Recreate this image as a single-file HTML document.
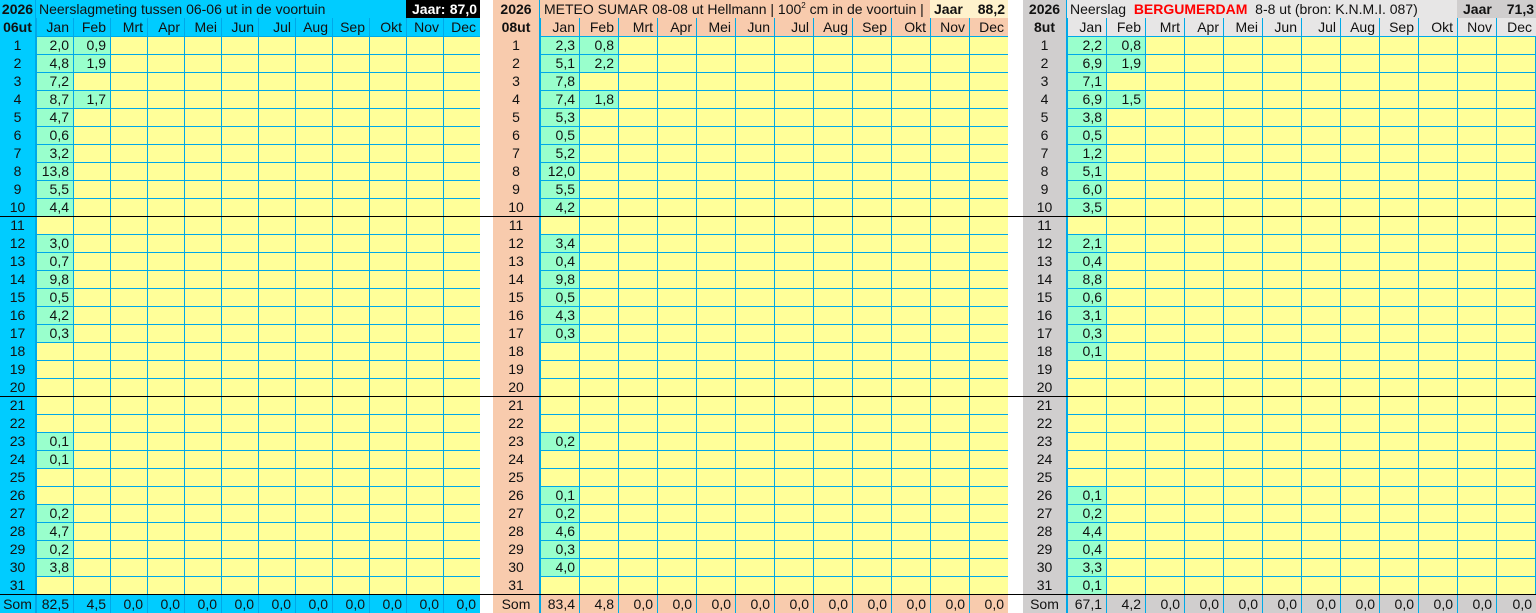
<!DOCTYPE html>
<html><head><meta charset="utf-8"><style>
*{margin:0;padding:0;box-sizing:border-box}
body{width:1536px;height:613px;position:relative;background:#fff;font-family:"Liberation Sans",sans-serif;font-size:14px;color:#111;overflow:hidden}
.p{position:absolute;top:0;height:613px}
.t{position:absolute;top:0;height:18px;line-height:18px;white-space:nowrap;overflow:hidden}
.t sup{font-size:8px;line-height:0;vertical-align:baseline;position:relative;top:-6px}
.dc{position:absolute;left:0;top:0;height:613px;text-align:center;line-height:18px;border-right:1px solid #00a8e8}
.dc b{display:block;height:18px}
.dc div{line-height:18px}
.row{position:absolute;display:flex;height:18px;line-height:18px}
.row span{display:block;text-align:right;padding-right:4px;height:100%;border-left:1px solid #00a8e8}
.b{position:absolute;top:36px;height:558px;background:#ffff99}
.b::after{content:"";position:absolute;inset:0;background-image:linear-gradient(to right,#00a8e8 1px,transparent 1px),linear-gradient(to bottom,#00a8e8 1px,transparent 1px);background-size:var(--w) 100%,100% 18px}
.g{position:absolute;height:18px;line-height:18px;background:#99ffcc;text-align:right;padding-right:4px}
.bl{position:absolute;left:0;width:1536px;height:1px;background:#000}
</style></head><body>

<!-- PANEL 1 -->
<div class="p" style="left:0;width:480px;--w:37px">
 <div class="t" style="left:36px;width:444px;background:#00ccff;padding-left:3px">Neerslagmeting tussen 06-06 ut in de voortuin</div>
 <div class="t" style="left:406px;width:74px;background:#000;color:#fff;font-weight:bold;padding:0 3px 0 6px;display:flex;justify-content:space-between"><span>Jaar:</span><span>87,0</span></div>
 <div class="dc" style="width:36px;background:#00ccff"><b>2026</b><b>06ut</b>
  <div>1<br>2<br>3<br>4<br>5<br>6<br>7<br>8<br>9<br>10<br>11<br>12<br>13<br>14<br>15<br>16<br>17<br>18<br>19<br>20<br>21<br>22<br>23<br>24<br>25<br>26<br>27<br>28<br>29<br>30<br>31</div>
  <div style="padding-top:1px">Som</div></div>
 <div class="row" style="left:36px;top:18px;background:#00ccff"><span style="width:37px">Jan</span><span style="width:37px">Feb</span><span style="width:37px">Mrt</span><span style="width:37px">Apr</span><span style="width:37px">Mei</span><span style="width:37px">Jun</span><span style="width:37px">Jul</span><span style="width:37px">Aug</span><span style="width:37px">Sep</span><span style="width:37px">Okt</span><span style="width:37px">Nov</span><span style="width:37px">Dec</span></div>
 <div class="b" style="left:36px;width:444px">
  <div class="g" style="left:0;width:37px;top:0">2,0</div><div class="g" style="left:0;width:37px;top:18px">4,8</div><div class="g" style="left:0;width:37px;top:36px">7,2</div><div class="g" style="left:0;width:37px;top:54px">8,7</div><div class="g" style="left:0;width:37px;top:72px">4,7</div><div class="g" style="left:0;width:37px;top:90px">0,6</div><div class="g" style="left:0;width:37px;top:108px">3,2</div><div class="g" style="left:0;width:37px;top:126px">13,8</div><div class="g" style="left:0;width:37px;top:144px">5,5</div><div class="g" style="left:0;width:37px;top:162px">4,4</div>
  <div class="g" style="left:0;width:37px;top:198px">3,0</div><div class="g" style="left:0;width:37px;top:216px">0,7</div><div class="g" style="left:0;width:37px;top:234px">9,8</div><div class="g" style="left:0;width:37px;top:252px">0,5</div><div class="g" style="left:0;width:37px;top:270px">4,2</div><div class="g" style="left:0;width:37px;top:288px">0,3</div>
  <div class="g" style="left:0;width:37px;top:396px">0,1</div><div class="g" style="left:0;width:37px;top:414px">0,1</div><div class="g" style="left:0;width:37px;top:468px">0,2</div><div class="g" style="left:0;width:37px;top:486px">4,7</div><div class="g" style="left:0;width:37px;top:504px">0,2</div><div class="g" style="left:0;width:37px;top:522px">3,8</div>
  <div class="g" style="left:37px;width:37px;top:0">0,9</div><div class="g" style="left:37px;width:37px;top:18px">1,9</div><div class="g" style="left:37px;width:37px;top:54px">1,7</div>
 </div>
 <div class="row" style="left:36px;top:595px;height:18px;background:#00ccff"><span style="width:37px">82,5</span><span style="width:37px">4,5</span><span style="width:37px">0,0</span><span style="width:37px">0,0</span><span style="width:37px">0,0</span><span style="width:37px">0,0</span><span style="width:37px">0,0</span><span style="width:37px">0,0</span><span style="width:37px">0,0</span><span style="width:37px">0,0</span><span style="width:37px">0,0</span><span style="width:37px">0,0</span></div>
</div>

<!-- PANEL 2 -->
<div class="p" style="left:493px;width:515px;--w:39px">
 <div class="t" style="left:47px;width:468px;background:#f8cbad;padding-left:4px">METEO SUMAR 08-08 ut Hellmann | 100<sup>2</sup> cm in de voortuin |</div>
 <div class="t" style="left:437px;width:78px;background:#fff2cc;font-weight:bold;padding:0 3px 0 4px;display:flex;justify-content:space-between"><span>Jaar</span><span>88,2</span></div>
 <div class="dc" style="width:47px;background:#f8cbad"><b>2026</b><b>08ut</b>
  <div>1<br>2<br>3<br>4<br>5<br>6<br>7<br>8<br>9<br>10<br>11<br>12<br>13<br>14<br>15<br>16<br>17<br>18<br>19<br>20<br>21<br>22<br>23<br>24<br>25<br>26<br>27<br>28<br>29<br>30<br>31</div>
  <div style="padding-top:1px">Som</div></div>
 <div class="row" style="left:47px;top:18px;background:#f8cbad"><span style="width:39px">Jan</span><span style="width:39px">Feb</span><span style="width:39px">Mrt</span><span style="width:39px">Apr</span><span style="width:39px">Mei</span><span style="width:39px">Jun</span><span style="width:39px">Jul</span><span style="width:39px">Aug</span><span style="width:39px">Sep</span><span style="width:39px">Okt</span><span style="width:39px">Nov</span><span style="width:39px">Dec</span></div>
 <div class="b" style="left:47px;width:468px">
  <div class="g" style="left:0;width:39px;top:0">2,3</div><div class="g" style="left:0;width:39px;top:18px">5,1</div><div class="g" style="left:0;width:39px;top:36px">7,8</div><div class="g" style="left:0;width:39px;top:54px">7,4</div><div class="g" style="left:0;width:39px;top:72px">5,3</div><div class="g" style="left:0;width:39px;top:90px">0,5</div><div class="g" style="left:0;width:39px;top:108px">5,2</div><div class="g" style="left:0;width:39px;top:126px">12,0</div><div class="g" style="left:0;width:39px;top:144px">5,5</div><div class="g" style="left:0;width:39px;top:162px">4,2</div>
  <div class="g" style="left:0;width:39px;top:198px">3,4</div><div class="g" style="left:0;width:39px;top:216px">0,4</div><div class="g" style="left:0;width:39px;top:234px">9,8</div><div class="g" style="left:0;width:39px;top:252px">0,5</div><div class="g" style="left:0;width:39px;top:270px">4,3</div><div class="g" style="left:0;width:39px;top:288px">0,3</div>
  <div class="g" style="left:0;width:39px;top:396px">0,2</div><div class="g" style="left:0;width:39px;top:450px">0,1</div><div class="g" style="left:0;width:39px;top:468px">0,2</div><div class="g" style="left:0;width:39px;top:486px">4,6</div><div class="g" style="left:0;width:39px;top:504px">0,3</div><div class="g" style="left:0;width:39px;top:522px">4,0</div>
  <div class="g" style="left:39px;width:39px;top:0">0,8</div><div class="g" style="left:39px;width:39px;top:18px">2,2</div><div class="g" style="left:39px;width:39px;top:54px">1,8</div>
 </div>
 <div class="row" style="left:47px;top:595px;height:18px;background:#f8cbad"><span style="width:39px">83,4</span><span style="width:39px">4,8</span><span style="width:39px">0,0</span><span style="width:39px">0,0</span><span style="width:39px">0,0</span><span style="width:39px">0,0</span><span style="width:39px">0,0</span><span style="width:39px">0,0</span><span style="width:39px">0,0</span><span style="width:39px">0,0</span><span style="width:39px">0,0</span><span style="width:39px">0,0</span></div>
</div>

<!-- PANEL 3 -->
<div class="p" style="left:1023px;width:513px;--w:39px">
 <div class="t" style="left:44px;width:469px;background:#e7e6e6;padding-left:3px">Neerslag &nbsp;<b style="color:#ff0000">BERGUMERDAM</b> &nbsp;8-8 ut (bron: K.N.M.I. 087)</div>
 <div class="t" style="left:434px;width:79px;background:#d0cece;font-weight:bold;padding:0 2px 0 6px;display:flex;justify-content:space-between"><span>Jaar</span><span>71,3</span></div>
 <div class="dc" style="width:44px;background:#d0cece"><b>2026</b><b>8ut</b>
  <div>1<br>2<br>3<br>4<br>5<br>6<br>7<br>8<br>9<br>10<br>11<br>12<br>13<br>14<br>15<br>16<br>17<br>18<br>19<br>20<br>21<br>22<br>23<br>24<br>25<br>26<br>27<br>28<br>29<br>30<br>31</div>
  <div style="padding-top:1px">Som</div></div>
 <div class="row" style="left:44px;top:18px;background:#e7e6e6"><span style="width:39px">Jan</span><span style="width:39px">Feb</span><span style="width:39px">Mrt</span><span style="width:39px">Apr</span><span style="width:39px">Mei</span><span style="width:39px">Jun</span><span style="width:39px">Jul</span><span style="width:39px">Aug</span><span style="width:39px">Sep</span><span style="width:39px">Okt</span><span style="width:39px">Nov</span><span style="width:40px">Dec</span></div>
 <div class="b" style="left:44px;width:469px">
  <div class="g" style="left:0;width:39px;top:0">2,2</div><div class="g" style="left:0;width:39px;top:18px">6,9</div><div class="g" style="left:0;width:39px;top:36px">7,1</div><div class="g" style="left:0;width:39px;top:54px">6,9</div><div class="g" style="left:0;width:39px;top:72px">3,8</div><div class="g" style="left:0;width:39px;top:90px">0,5</div><div class="g" style="left:0;width:39px;top:108px">1,2</div><div class="g" style="left:0;width:39px;top:126px">5,1</div><div class="g" style="left:0;width:39px;top:144px">6,0</div><div class="g" style="left:0;width:39px;top:162px">3,5</div>
  <div class="g" style="left:0;width:39px;top:198px">2,1</div><div class="g" style="left:0;width:39px;top:216px">0,4</div><div class="g" style="left:0;width:39px;top:234px">8,8</div><div class="g" style="left:0;width:39px;top:252px">0,6</div><div class="g" style="left:0;width:39px;top:270px">3,1</div><div class="g" style="left:0;width:39px;top:288px">0,3</div><div class="g" style="left:0;width:39px;top:306px">0,1</div>
  <div class="g" style="left:0;width:39px;top:450px">0,1</div><div class="g" style="left:0;width:39px;top:468px">0,2</div><div class="g" style="left:0;width:39px;top:486px">4,4</div><div class="g" style="left:0;width:39px;top:504px">0,4</div><div class="g" style="left:0;width:39px;top:522px">3,3</div><div class="g" style="left:0;width:39px;top:540px">0,1</div>
  <div class="g" style="left:39px;width:39px;top:0">0,8</div><div class="g" style="left:39px;width:39px;top:18px">1,9</div><div class="g" style="left:39px;width:39px;top:54px">1,5</div>
 </div>
 <div class="row" style="left:44px;top:595px;height:18px;background:#d0cece"><span style="width:39px">67,1</span><span style="width:39px">4,2</span><span style="width:39px">0,0</span><span style="width:39px">0,0</span><span style="width:39px">0,0</span><span style="width:39px">0,0</span><span style="width:39px">0,0</span><span style="width:39px">0,0</span><span style="width:39px">0,0</span><span style="width:39px">0,0</span><span style="width:39px">0,0</span><span style="width:40px">0,0</span></div>
</div>

<div class="bl" style="top:216px"></div>
<div class="bl" style="top:396px"></div>
<div class="bl" style="top:594px"></div>
</body></html>
